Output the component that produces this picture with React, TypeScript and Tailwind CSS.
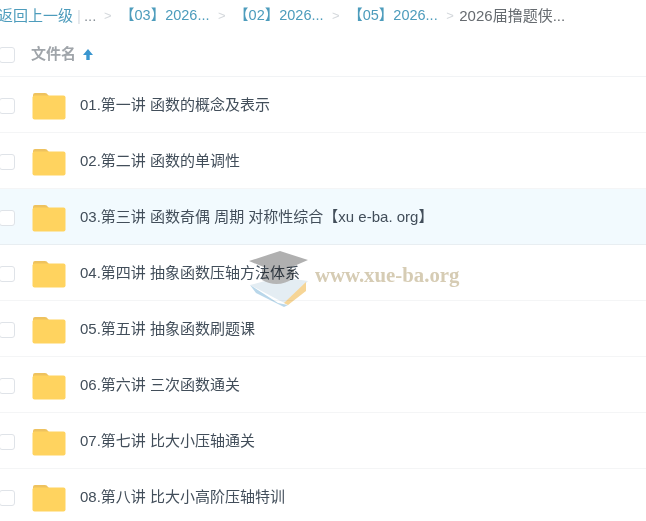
const rows = [
  "01.第一讲 函数的概念及表示",
  "02.第二讲 函数的单调性",
  "03.第三讲 函数奇偶 周期 对称性综合【xu e-ba. org】",
  "04.第四讲 抽象函数压轴方法体系",
  "05.第五讲 抽象函数刷题课",
  "06.第六讲 三次函数通关",
  "07.第七讲 比大小压轴通关",
  "08.第八讲 比大小高阶压轴特训",
];

function Check() {
  return <span className="block w-[16px] h-[16px] ml-[-1px] shrink-0 rounded-[3px] border border-[#dfe3e8] bg-white" />;
}

function Folder() {
  return (
    <svg width="34" height="28" viewBox="0 0 34 28" className="block shrink-0">
      <path d="M1 3 Q1 1 3 1 H13 Q15 1 16 3 L17 4 H1 Z" fill="#eec25f" />
      <rect x="0.5" y="3.5" width="33" height="24" rx="2" fill="#ffd35f" />
    </svg>
  );
}

function Sep() {
  return <span className="text-[#d4d8dc] px-[8.5px] text-[13px] font-light">&gt;</span>;
}

function Crumb({ t }: { t: string }) {
  return <span className="text-[#4d9cbc] text-[14.5px]">{t}</span>;
}

export default function App() {
  return (
    <div className="relative w-[646px] h-[521px] overflow-hidden bg-white text-[15px] font-['Liberation_Sans','Noto_Sans_CJK_SC',sans-serif]">
      <div className="h-[32px] flex items-center whitespace-nowrap ml-[-2px]">
        <span className="text-[#4d9cbc]">返回上一级</span>
        <span className="text-[#d8dde2] px-[4px]">|</span>
        <span className="text-[#8a9299] ml-[-1px] mr-[-1px]">...</span>
        <Sep />
        <Crumb t="【03】2026..." />
        <Sep />
        <Crumb t="【02】2026..." />
        <Sep />
        <Crumb t="【05】2026..." />
        <Sep />
        <span className="text-[#666b70] ml-[-3px]">2026届撸题侠...</span>
      </div>
      <div className="h-[45px] pt-[1px] flex items-center border-b border-[#f1f3f5]">
        <Check />
        <span className="ml-[16px] text-[#a0a5aa] font-bold">文件名</span>
        <svg width="12" height="13" viewBox="0 0 12 13" className="ml-[6px]">
          <path d="M6 1 L11 7 H7.7 V12 H4.3 V7 H1 Z" fill="#3a96cf" />
        </svg>
      </div>
      {rows.map((r, i) => (
        <div
          key={r}
          className={
            "h-[56px] pt-[2px] flex items-center border-b " +
            (i === 2 ? "bg-[#f2fafe] border-[#e8eef2]" : "border-[#f4f5f6]")
          }
        >
          <Check />
          <span className="ml-[17px]"><Folder /></span>
          <span className="ml-[14px] text-[#424e5a] whitespace-nowrap">{r}</span>
        </div>
      ))}
      <div className="absolute left-[248px] top-[249px] flex items-center mix-blend-multiply">
        <svg width="62" height="58" viewBox="0 0 62 58">
          <path d="M2 36 L32 28 L60 32 L40 56 Z" fill="#e4edf3" />
          <path d="M36 54 L58 33 L58 42 L40 56 Z" fill="#f6d596" />
          <path d="M2 36 L30 54 L40 56 L36 58 L8 44 Z" fill="#b9d7ea" />
          <path d="M14 20 V31 Q30 40 46 29 V20 Z" fill="#b5b5b5" />
          <path d="M1 12 L32 2 L60 11 L30 24 Z" fill="#b0b0b0" />
        </svg>
        <span className="ml-[5px] mt-[-6px] text-[20.8px] font-bold text-[#d6ccb4] font-['Liberation_Serif',serif]">www.xue-ba.org</span>
      </div>
    </div>
  );
}
